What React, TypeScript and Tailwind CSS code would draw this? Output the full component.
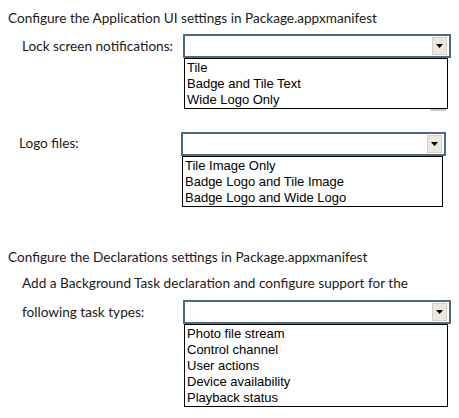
import React from "react";

const Combo = ({ items, tail }: { items: string[]; tail?: boolean }) => (
  <div className="flex flex-col">
    <div className="h-[24px] border-2 border-[#4d6985] bg-white flex items-center justify-end pr-[2px]">
      <div className="w-[15px] h-[18px] bg-[#ebe9de] border border-[#d4d0c2] flex items-center justify-center">
        <svg width="7" height="4" viewBox="0 0 7 4"><path d="M0 0h7L3.5 4z" fill="#000" /></svg>
      </div>
    </div>
    <div className="ml-[1px] mr-[3px] border border-black bg-white px-[2px] pt-[1px] flex flex-col">
      {items.map((t) => (
        <div key={t} className="h-[16px] shrink-0 leading-[16px] text-[13px] text-black" style={{ fontFamily: '"Liberation Sans", Arial, sans-serif' }}>
          {t}
        </div>
      ))}
    </div>
    {tail && <div className="self-end mr-[5px] w-[16px] h-[2px] bg-[#c9c9c9]" />}
  </div>
);

export default function App() {
  return (
    <div className="w-[459px] h-[418px] bg-white text-[#1a1a1a] text-[13.6px] leading-[18px] overflow-hidden" style={{ fontFamily: 'Lato, "Open Sans", sans-serif' }}>
      <div className="pl-[8px] pt-[9px]">Configure the Application UI settings in Package.appxmanifest</div>
      <div className="flex mt-[7px]">
        <div className="w-[183px] pl-[22px] pt-[3px]">Lock screen notifications:</div>
        <div className="w-[268px]">
          <Combo items={["Tile", "Badge and Tile Text", "Wide Logo Only"]} tail />
        </div>
      </div>
      <div className="flex mt-[21px]">
        <div className="w-[181px] pl-[19px] pt-[2px]">Logo files:</div>
        <div className="w-[265px]">
          <Combo items={["Tile Image Only", "Badge Logo and Tile Image", "Badge Logo and Wide Logo"]} />
        </div>
      </div>
      <div className="pl-[8px] mt-[41px]">Configure the Declarations settings in Package.appxmanifest</div>
      <div className="pl-[22px] mt-[8px]">Add a Background Task declaration and configure support for the</div>
      <div className="flex mt-[8px]">
        <div className="w-[183px] pl-[22px] pt-[3px]">following task types:</div>
        <div className="w-[268px]">
          <Combo items={["Photo file stream", "Control channel", "User actions", "Device availability", "Playback status"]} />
        </div>
      </div>
    </div>
  );
}
